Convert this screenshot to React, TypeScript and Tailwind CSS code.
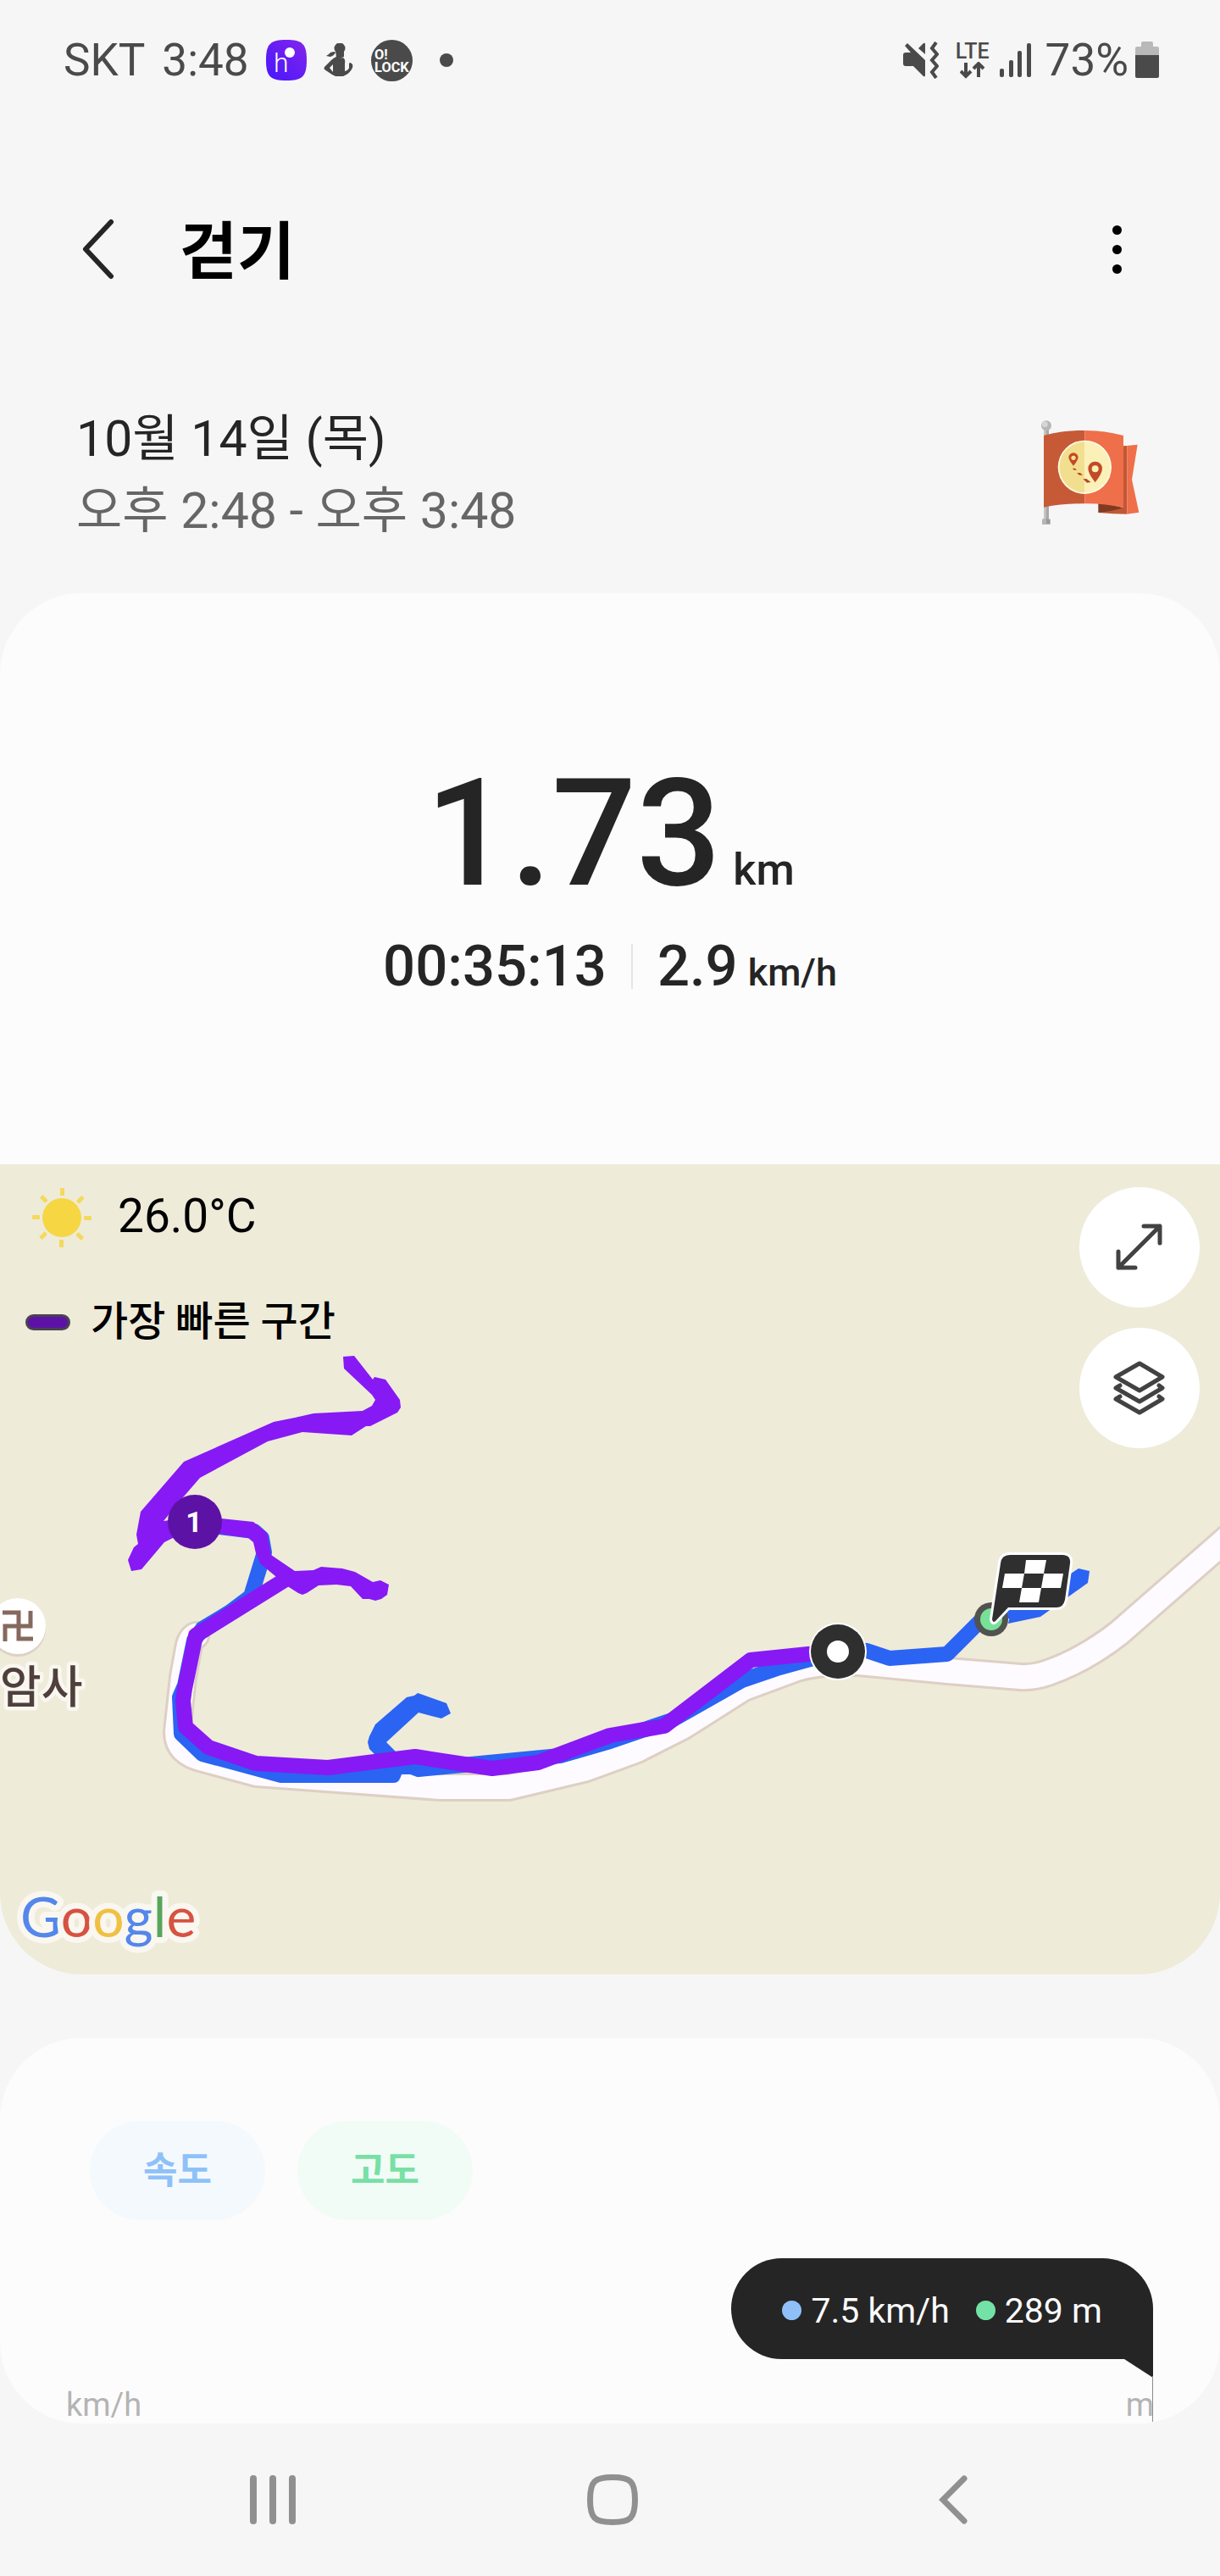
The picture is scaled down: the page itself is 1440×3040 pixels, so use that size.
import React from "react";

const SUN_RAYS = [0, 45, 90, 135, 180, 225, 270, 315];

function StatusBar() {
  return (
    <div className="flex items-center justify-between h-[142px] pl-[75px] pr-[72px] text-[#4a4a4a] text-[53px] leading-[53px]">
      <div className="flex items-center gap-5">
        <span>SKT</span>
        <span>3:48</span>
        <svg width="48" height="48" viewBox="0 0 48 48" aria-hidden="true">
          <defs>
            <linearGradient id="hGrad" x1="0" y1="1" x2="1" y2="0">
              <stop offset="0" stopColor="#4717fb" />
              <stop offset="1" stopColor="#8424ec" />
            </linearGradient>
          </defs>
          <path d="M24 0C43 0 48 5 48 24S43 48 24 48 0 43 0 24 5 0 24 0Z" fill="url(#hGrad)" />
          <text x="9" y="38" fontSize="32" fontWeight="300" fill="#fff">h</text>
          <circle cx="28" cy="15" r="6" fill="#fff" />
        </svg>
        <svg width="36" height="40" viewBox="0 0 36 40" fill="currentColor" aria-hidden="true">
          <ellipse cx="19" cy="6" rx="6.500" ry="6.500" />
          <path d="M14 8 24 9 24 16Q18 19 15 17Z" />
          <path d="M13 10Q8 10 6 13L3 15 8 16Q12 15 14 11Z" />
          <path fillRule="evenodd" d="M15 16Q20 18 23 17 26 19 25 24V33Q29 32 30 29V24Q31 22 33 24 35 25 34 29 31 36 23 39H14Q12 38 10 37L1 31Q0 29 1 28L9 20Q12 17 15 16ZM7 29 11 34V25Z" />
        </svg>
        <svg width="49" height="49" viewBox="0 0 48 48" aria-hidden="true">
          <circle cx="24" cy="24" r="24" fill="#4a4a4a" />
          <text x="4" y="23" fontSize="16" fontWeight="700" fill="#fff">O!</text>
          <text x="4" y="37" fontSize="16" fontWeight="700" fill="#fff">LOCK</text>
        </svg>
        <span className="ml-3 size-4 rounded-full bg-[#4a4a4a]" />
      </div>

      <div className="flex items-center">
        <svg width="42" height="44" viewBox="0 0 42 44" fill="currentColor" aria-hidden="true">
          <path d="M2 5 5 2 26 22V40Q26 42 24 41L12 29H3Q0 29 0 26V16Q0 13 3 13H9Z" />
          <path d="M18 8 24 2Q26 1 26 3V15Z" />
          <path d="M39 1 34 8 40 15 34 22 40 29 34 36 39 43" fill="none" stroke="currentColor" strokeWidth="4" />
        </svg>
        <div className="flex flex-col items-center ml-5">
          <span className="text-[25px] leading-6 font-medium">LTE</span>
          <svg width="30" height="20" viewBox="0 0 30 20" fill="none" stroke="currentColor" strokeWidth="4" aria-hidden="true">
            <path d="M7 1V17M1 11 7 17 13 11" />
            <path d="M22 18V2M16 8 22 2 28 8" />
          </svg>
        </div>
        <svg className="ml-3" width="38" height="40" viewBox="0 0 38 40" fill="currentColor" aria-hidden="true">
          <rect x="0" y="30" width="5" height="10" rx="2" />
          <rect x="11" y="20" width="5" height="20" rx="2" />
          <rect x="21" y="9" width="5" height="31" rx="2" />
          <rect x="32" y="0" width="5" height="40" rx="2" />
        </svg>
        <span className="ml-4">73%</span>
        <svg className="ml-2" width="28" height="44" viewBox="0 0 28 44" aria-hidden="true">
          <path d="M7 2Q7 0 9 0H19Q21 0 21 2V6H26Q28 6 28 8V16H0V8Q0 6 2 6H7Z" fill="#b9b9b9" />
          <path d="M0 16H28V41Q28 43 26 43H2Q0 43 0 41Z" fill="#4a4a4a" />
        </svg>
      </div>
    </div>
  );
}

function FlagBadge() {
  return (
    <svg className="flex-none" width="116" height="129" viewBox="146 106 348 387" aria-label="경로">
      <rect x="155" y="135" width="18" height="325" fill="#a9a9a9" />
      <rect x="155" y="135" width="8" height="325" fill="#c6c6c6" />
      <rect x="150" y="456" width="28" height="18" fill="#999" />
      <rect x="150" y="456" width="14" height="18" fill="#b5b5b5" />
      <circle cx="164" cy="125" r="18" fill="#b7b7b7" />
      <circle cx="159" cy="120" r="10" fill="#d6d6d6" />
      <path d="M348 400Q400 404 437 416L437 432 348 433Z" fill="#7f3a22" />
      <path d="M437 197 450 196V438Q400 438 348 433 400 428 437 416Z" fill="#c25735" />
      <path d="M450 196 487 192 467 316 492 432 450 438Z" fill="#ef6f4a" />
      <path d="M155 160Q228 140 300 142V401Q225 400 155 414Z" fill="#c65a37" />
      <path d="M300 142Q372 142 437 160V415Q370 400 300 401Z" fill="#ef6f4a" />
      <circle cx="300" cy="272" r="95" fill="#fffbe6" />
      <path d="M300 182A90 90 0 0 0 300 362Z" fill="#f1df8f" />
      <path d="M300 182A90 90 0 0 1 300 362Z" fill="#fbf0b8" />
      <path fillRule="evenodd" d="M260 267Q243 246 243 237A17 16 0 0 1 277 237Q277 246 260 267ZM260 231A8 8 0 1 0 260 247 8 8 0 1 0 260 231Z" fill="#c24a26" />
      <path fillRule="evenodd" d="M337 326Q312 294 312 277A25 25 0 0 1 362 277Q362 294 337 326ZM337 266A12 12 0 1 0 337 290 12 12 0 1 0 337 266Z" fill="#c24a26" />
      <path d="M256 276H266L272 282H262ZM272 292H284L293 300H281ZM294 314 306 313 322 325 308 327Z" fill="#b54a28" />
    </svg>
  );
}

function RouteMap() {
  const road = "M1475 418 1440 449 1321 553Q1280 585 1237 600 1220 606 1204 605L1119 598 1014 588Q970 586 940 595L878 618 807 663 752 691 689 714 601 735H519L303 719 240 702Q209 695 209 670L216 605 222 572Q224 560 231 556";

  return (
    <svg className="block w-full h-auto bg-[#eeebd9]" viewBox="0 0 1440 956" aria-label="걷기 경로 지도">
      {/* Road */}
      <path d={road} fill="none" stroke="#decfc5" strokeWidth="34" strokeLinejoin="round" strokeLinecap="round" />
      <path d={road} fill="none" stroke="#fdfbff" strokeWidth="28" strokeLinejoin="round" strokeLinecap="round" />

      {/* Whole route */}
      <g fill="none" stroke="#2b63f3" strokeWidth="18" strokeLinejoin="round">
        <path d="M250 427 300 433 309 441 312 458 296 510 272 528 239 548 229 562 218 615 212 629 214 672 239 696 332 721H464L470 705 494 714 661 698 720 681 793 656 876 609 920 594 989 575" />
        <path d="M985 572 1023 574 1050 583 1118 578 1166 530 1227 523 1276 486" />
      </g>
      <path d="M1264 483 1273 477 1286 480 1284 494 1228 534 1190 542 1194 524 1226 520Z" fill="#2b63f3" />
      <path d="M443 697 436 690 434 682 436 675 443 661 480 629 489 627 493 624 499 626 527 636 532 648 521 654 494 647 456 682 467 693 490 720H440Z" fill="#2b63f3" />

      {/* Fastest section */}
      <path d="M405 227 418 226 440 254 442 251 455 254 472 278 473 287 469 293 437 309 432 309 415 320 357 316 316 327 236 370 217 392 193 421 230 416 261 418 299 422 315 435 320 461 348 480 370 479 379 475 404 477 419 481 440 493 449 491 459 496 457 508 450 513 443 515 436 513 428 513 414 498 397 496 376 497 362 506 357 508 352 506 341 499 325 486 307 471 302 459 299 446 293 441 258 436 204 441 194 446 167 478 155 480 151 467 158 452 163 448 161 437 166 410 217 351 323 304 348 299 370 294 428 291 439 285 443 278 439 272 406 241Z" fill="#8719f5" />
      <path d="M345 485 231 556 218 619 216 633 219 664 246 688 302 707 387 712 490 699 581 713 635 706 720 674 784 663 886 585 954 578 989 575" fill="none" stroke="#8719f5" strokeWidth="18" strokeLinejoin="round" />
      <circle cx="230" cy="422" r="32" fill="#5d12a6" />
      <text x="229" y="434" fontSize="34" fontWeight="700" fill="#fff" textAnchor="middle">1</text>

      {/* Temple */}
      <circle cx="21" cy="548" r="33" fill="#ddd0c6" />
      <circle cx="21" cy="545" r="33" fill="#fff" />
      <path d="M3 529H22V560H39M6 563V545H36V527" fill="none" stroke="#85695e" strokeWidth="5" />
      <text x="0" y="636" fontSize="53" fontWeight="500" fill="#4f403b" stroke="#f9f7f0" strokeWidth="9" strokeLinejoin="round" paintOrder="stroke">암사</text>

      {/* Start point */}
      <circle cx="989" cy="575" r="34" fill="#fff" />
      <circle cx="989" cy="575" r="32" fill="#2f2f2f" />
      <circle cx="989" cy="575" r="13" fill="#fff" />

      {/* Finish flag */}
      <circle cx="1170" cy="537" r="20" fill="#505350" />
      <circle cx="1170" cy="537" r="13" fill="#78e097" />
      <path d="M1192 461H1254Q1264 461 1263 471L1257 514Q1255 523 1247 523H1190L1175 539Q1172 542 1171 537L1181 471Q1182 461 1192 461Z" fill="#2f2f2f" stroke="#fff" strokeWidth="6" strokeLinejoin="round" paintOrder="stroke" />
      <path d="M1211 467H1235L1232 483H1209ZM1186 483H1209L1206 500H1183ZM1232 483H1255L1252 500H1229ZM1206 500H1229L1226 517H1203Z" fill="#fff" />

      <text x="24" y="912" fontSize="66" fontFamily="Lato, sans-serif" stroke="#f9f7f0" strokeWidth="14" strokeLinejoin="round" paintOrder="stroke">
        <tspan fill="#5486ec">G</tspan>
        <tspan fill="#d65241">o</tspan>
        <tspan fill="#f1bf42">o</tspan>
        <tspan fill="#5486ec">g</tspan>
        <tspan fill="#58a55c">l</tspan>
        <tspan fill="#d65241">e</tspan>
      </text>
    </svg>
  );
}

export default function App() {
  return (
    <div className="min-h-screen bg-[#f6f6f6] overflow-hidden font-['Roboto','Noto_Sans_CJK_KR',sans-serif]">
      <StatusBar />

      {/* Header */}
      <header className="flex items-center justify-between h-[304px] pl-[92px] pr-[102px]">
        <div className="flex items-center gap-[72px]">
          <button aria-label="뒤로">
            <svg className="block" width="48" height="72" viewBox="0 0 48 72" fill="none" stroke="#252525" strokeWidth="6" strokeLinecap="round" strokeLinejoin="round">
              <path d="M39 4 9 36 39 68" />
            </svg>
          </button>
          <h1 className="pt-2 text-[74px] leading-[88px] font-bold text-black">걷기</h1>
        </div>
        <button aria-label="더보기" className="flex flex-col items-center gap-3 px-[14px]">
          <span className="size-[11px] rounded-full bg-black" />
          <span className="size-[11px] rounded-full bg-black" />
          <span className="size-[11px] rounded-full bg-black" />
        </button>
      </header>

      <section className="flex items-center justify-between pt-[29px] pb-[55px] pl-[90px] pr-[95px]">
        <div className="text-[59px] leading-[85px]">
          <p className="text-[#252525]">10월 14일 (목)</p>
          <p className="text-[#666]">오후 2:48 - 오후 3:48</p>
        </div>
        <FlagBadge />
      </section>

      {/* Summary + map */}
      <section className="bg-[#fcfcfc] rounded-[96px] overflow-hidden">
        <div className="pt-[196px] pb-[200px] text-[#252525] font-medium">
          <div className="flex items-baseline justify-center gap-[14px]">
            <span className="text-[176px] leading-[176px]">1.73</span>
            <span className="text-[52px] leading-[52px]">km</span>
          </div>
          <div className="flex items-center justify-center mt-[34px]">
            <span className="text-[67px] leading-[68px]">00:35:13</span>
            <span className="w-[2px] h-[53px] mx-[29px] bg-[#e4e4e4]" />
            <span className="flex items-baseline gap-3">
              <span className="text-[67px] leading-[68px]">2.9</span>
              <span className="text-[45px] leading-[46px]">km/h</span>
            </span>
          </div>
        </div>

        <div className="relative">
          <RouteMap />
          <div className="absolute top-[24px] left-[30px] flex flex-col gap-[60px] text-black">
            <div className="flex items-center gap-[23px]">
              <svg width="86" height="78" viewBox="0 0 86 78" aria-label="맑음">
                <circle cx="43" cy="39" r="23" fill="#f6d743" />
                {SUN_RAYS.map((deg) => (
                  <rect key={deg} x="41" y="4" width="5" height="9" rx="1" fill="#f4d95c" transform={`rotate(${deg} 43 39)`} />
                ))}
              </svg>
              <span className="pb-1 text-[55px] leading-[74px]">26.0°C</span>
            </div>
            <div className="flex items-center gap-6">
              <span className="w-[53px] h-[19px] rounded-full border-[3px] border-[#4b4152] bg-[#5d12a6]" />
              <span className="text-[48px] leading-[48px] font-medium">가장 빠른 구간</span>
            </div>
          </div>
          <div className="absolute top-[27px] right-6 flex flex-col gap-6">
            <button aria-label="전체 화면" className="size-[142px] rounded-full bg-white">
              <svg viewBox="0 0 142 142" fill="none" stroke="#424242" strokeWidth="5" strokeLinecap="round" strokeLinejoin="round">
                <path d="M46 95 95 46M76 46H95V66M46 76V95H66" />
              </svg>
            </button>
            <button aria-label="지도 유형" className="size-[142px] rounded-full bg-white">
              <svg viewBox="0 0 142 142" fill="none" stroke="#424242" strokeWidth="5" strokeLinecap="round" strokeLinejoin="round">
                <path d="M71 42 98 58 71 74 43 58Z" />
                <path d="M94 68 98 71 71 87 43 71 48 68" />
                <path d="M94 81 98 84 71 100 43 84 48 81" />
              </svg>
            </button>
          </div>
        </div>
      </section>

      {/* Chart */}
      <section className="flex flex-col mt-[75px] pt-[98px] bg-[#fcfcfc] rounded-[96px] overflow-hidden">
        <div className="flex gap-[38px] pl-[106px] text-[44px] leading-[44px] font-bold">
          <button className="w-[207px] h-[117px] rounded-full bg-[#f4f9fd] text-[#8fc1f8]">속도</button>
          <button className="w-[207px] h-[117px] rounded-full bg-[#f2fcf7] text-[#78e0a5]">고도</button>
        </div>
        <div className="relative self-end flex items-center h-[119px] mt-[45px] mr-[79px] pt-1 pl-[60px] pr-[60px] rounded-l-[60px] rounded-tr-[60px] bg-[#252525] text-[#fcfcfc] text-[41px] leading-[48px]">
          <span className="size-[23px] mr-[11px] rounded-full bg-[#8fc1f8]" />
          <span>7.5 km/h</span>
          <span className="size-[23px] ml-[31px] mr-[11px] rounded-full bg-[#74e2a6]" />
          <span>289 m</span>
          <svg className="absolute top-full right-0" width="34" height="74" viewBox="0 0 34 74" aria-hidden="true">
            <path d="M0 0H34V22Z" fill="#252525" />
            <rect x="33" y="20" width="1" height="54" fill="#8c8c8c" />
          </svg>
        </div>
        <div className="flex justify-between mt-8 px-[78px] text-[38px] leading-[44px] text-[#b4b4b4]">
          <span>km/h</span>
          <span>m</span>
        </div>
      </section>

      {/* Navigation bar */}
      <nav className="flex h-[180px] pl-[122px] pr-[116px]">
        <button aria-label="최근 앱" className="flex-1 flex items-center justify-center">
          <svg width="54" height="58" viewBox="0 0 54 58" fill="#909090">
            <rect x="0" y="0" width="8" height="58" rx="4" />
            <rect x="23" y="0" width="8" height="58" rx="4" />
            <rect x="46" y="0" width="8" height="58" rx="4" />
          </svg>
        </button>
        <button aria-label="홈" className="flex-1 flex items-center justify-center">
          <svg width="62" height="62" viewBox="0 0 62 62" fill="none" stroke="#909090" strokeWidth="7">
            <path d="M31 4.500C52 4.500 57.500 9 57.500 31S52 57.500 31 57.500 4.500 53 4.500 31 10 4.500 31 4.500Z" />
          </svg>
        </button>
        <button aria-label="이전" className="flex-1 flex items-center justify-center">
          <svg width="36" height="60" viewBox="0 0 36 60" fill="none" stroke="#909090" strokeWidth="7" strokeLinecap="round">
            <path d="M32 5 7 30 32 55" />
          </svg>
        </button>
      </nav>
    </div>
  );
}
